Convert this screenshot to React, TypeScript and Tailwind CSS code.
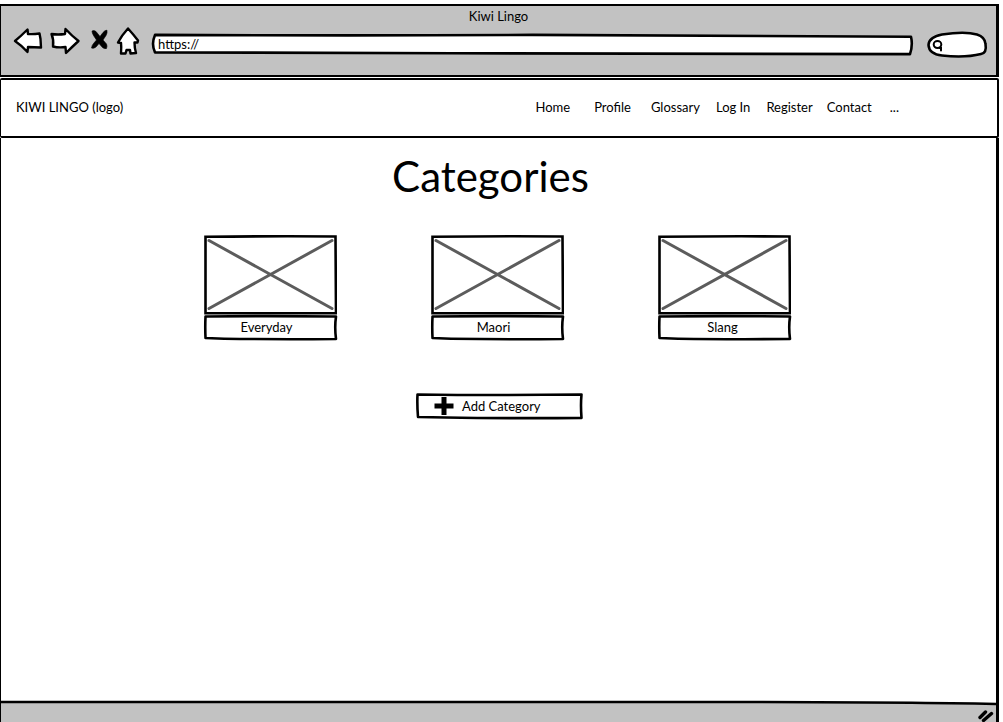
import type { ReactNode } from 'react';

const navLinks = [
  { label: 'Home', spacing: '' },
  { label: 'Profile', spacing: 'ml-6' },
  { label: 'Glossary', spacing: 'ml-5' },
  { label: 'Log In', spacing: 'ml-4' },
  { label: 'Register', spacing: 'ml-4' },
  { label: 'Contact', spacing: 'ml-3.5' },
  { label: '...', spacing: 'ml-4.5' },
];

const categories = [
  { label: 'Everyday', spacing: 'pr-2' },
  { label: 'Maori', spacing: 'pr-2' },
  { label: 'Slang', spacing: 'pr-1' },
];

/* Hand-drawn outline that stretches with the box it decorates. */
function Outline({ box, d }: { box: string; d: string }) {
  return (
    <svg
      aria-hidden="true"
      viewBox={box}
      preserveAspectRatio="none"
      className="pointer-events-none absolute inset-0 size-full overflow-visible"
    >
      <path d={d} fill="white" stroke="black" strokeWidth="2.6" strokeLinejoin="round" vectorEffect="non-scaling-stroke" />
    </svg>
  );
}

function IconButton({ label, className, children }: { label: string; className: string; children: ReactNode }) {
  return (
    <button type="button" aria-label={label} className={`shrink-0 ${className}`}>
      {children}
    </button>
  );
}

function BrowserBar() {
  return (
    <header className="mr-1 h-[73px] border-2 border-r-3 border-l-1 border-black bg-[#c2c2c2]">
      <div className="h-[19px] text-center leading-5">Kiwi Lingo</div>
      <div className="flex h-8 items-center pl-3 pr-[9px]">
        <IconButton label="Back" className="h-8 w-8">
          <svg viewBox="0 0 32 32" className="size-full" fill="white" stroke="black" strokeWidth="2.4" strokeLinejoin="round">
            <path d="M2 16 Q8 11 14.5 4.500 L15 9 Q20 9.500 26.500 8.500 L27.500 14 L28 22.500 Q21 22 15 22 L14.500 27 Q8 20 2 16 Z" />
          </svg>
        </IconButton>
        <IconButton label="Forward" className="ml-1 h-8 w-8">
          <svg viewBox="0 0 32 32" className="size-full" fill="white" stroke="black" strokeWidth="2.4" strokeLinejoin="round">
            <path d="M2.5 9 Q9 10 16 9 L16.500 4 Q23 11 29.500 16 Q23 22 17 28 L16.500 22 Q10 23 4 21.500 Q5 15 2.500 9 Z" />
          </svg>
        </IconButton>
        <IconButton label="Stop" className="ml-1.5 h-8 w-8">
          <svg viewBox="0 0 32 32" className="size-full" fill="black" stroke="black" strokeWidth="0.6" strokeLinejoin="round">
            <path d="M5 6 Q7 5 9 6.500 L13 11.500 L16 7.500 Q18 5 20 5.200 Q20.500 8 19 10.500 L16 15 L19.500 19 Q20.500 21 19.500 23.500 Q17 24 15.500 22.500 L12 18.500 L9 22 Q6.500 24 4.500 23 Q5 20 6.500 18.500 L9.500 15 L6.500 10.500 Q5 8 5 6 Z" />
          </svg>
        </IconButton>
        <IconButton label="Home page" className="-ml-1.5 h-8 w-8">
          <svg viewBox="0 0 32 32" className="size-full" fill="white" stroke="black" strokeWidth="2.4" strokeLinejoin="round">
            <path d="M15 3.500 Q20 9 25 15.500 L24.500 17.500 L21.500 17.500 Q21.500 23 23 28 L17.500 28.500 L17 25 L13.500 25 L12.500 28.500 L8 28.500 Q8.500 22 8 18 L5 17.500 Q9 10 15 3.500 Z" />
          </svg>
        </IconButton>
        <div className="relative ml-[7px] mt-2 h-[22px] min-w-0 grow">
          <Outline box="0 0 760 24" d="M3 1 Q200 2 380 1 Q600 3 758 3 Q760 12 757 22 Q500 21 300 21 L3 20 Q-1 11 3 1 Z" />
          <input
            aria-label="Address"
            defaultValue="https://"
            className="relative h-5 w-full bg-transparent px-1.5 leading-5 outline-none"
          />
        </div>
        <div className="relative ml-3.5 mt-2 h-6 w-15 shrink-0">
          <Outline box="0 0 60 24" d="M1.500 12 Q2 4 15 1.500 Q38 -2 50 1.500 Q58 4 58.500 11 Q60 20 54 21 Q38 25 15 22.500 Q2 21 1.500 12 Z" />
          <svg aria-hidden="true" viewBox="0 0 16 16" className="absolute left-1 top-1 size-4" fill="none" stroke="black" strokeWidth="2" strokeLinecap="round">
            <ellipse cx="6.500" cy="7.500" rx="3.800" ry="3.400" />
            <path d="M8.500 11 H10 V13.500" />
          </svg>
          <input aria-label="Search" className="relative h-5 w-full bg-transparent pl-5 outline-none" />
        </div>
      </div>
    </header>
  );
}

function SiteNav() {
  return (
    <div className="mr-1 mt-px flex h-[60px] items-center justify-between rounded-xs border-2 border-l-1 border-black bg-white pb-0.5 pl-[15px] pr-[98px]">
      <a href="#home" className="whitespace-nowrap">KIWI LINGO (logo)</a>
      <nav aria-label="Main" className="flex items-center whitespace-nowrap">
        {navLinks.map(({ label, spacing }) => (
          <a key={label} href={`#${label}`} className={spacing}>
            {label}
          </a>
        ))}
      </nav>
    </div>
  );
}

function CategoryCard({ label, spacing }: { label: string; spacing: string }) {
  return (
    <a href={`#${label}`} className="block w-[133px]">
      <svg aria-hidden="true" viewBox="0 0 133 80" className="block h-20 w-full" fill="none" strokeLinecap="round">
        <path d="M1.5 1.8 Q70 1 131.5 1.5 L132 78.2 Q60 78 1.5 78.3 Z" stroke="black" strokeWidth="2.6" />
        <path d="M5 5.5 L128 73.5 M128 5.5 L5 73.5" stroke="#5c5c5c" strokeWidth="3" />
      </svg>
      <div className="relative h-[25px]">
        <Outline box="0 0 132 25" d="M1.5 1.5 Q60 .8 131 1.5 Q129.500 12 131 24 Q70 24.500 20 23.700 L1.500 23 Q1 12 1.500 1.500 Z" />
        <div className={`relative text-center leading-6 ${spacing}`}>{label}</div>
      </div>
    </a>
  );
}

export default function App() {
  return (
    <div className="flex min-h-screen flex-col bg-white pt-1 font-['Lato','Liberation_Sans',sans-serif] text-[13px] leading-5 text-black">
      <BrowserBar />
      <SiteNav />
      <div className="mr-1 flex grow flex-col border-l-1 border-r-3 border-black">
        <main className="grow">
          <h1 className="pr-4 pt-3.5 text-center text-[42px] leading-12">Categories</h1>
          <section aria-label="Categories" className="mt-[35px] flex justify-center gap-[94px] pr-0.5">
            {categories.map((category) => (
              <CategoryCard key={category.label} {...category} />
            ))}
          </section>
          <div className="mt-[53px] flex justify-center pl-0.5">
            <button type="button" className="relative flex h-[26px] w-[167px] items-center pl-[18px]">
              <Outline box="0 0 167 26" d="M1.500 1.500 Q80 2.500 165.500 1.500 Q164.500 12 165.500 25 Q90 25.500 30 24.500 L2 24 Q1 12 1.500 1.500 Z" />
              <svg aria-hidden="true" viewBox="0 0 20 20" className="relative size-5" stroke="black" strokeWidth="5" strokeLinecap="butt">
                <path d="M10 1 V19 M.5 10 H19.500" />
              </svg>
              <span className="relative ml-2">Add Category</span>
            </button>
          </div>
        </main>
        <footer className="relative flex h-[21px] items-end justify-end bg-[#c2c2c2] pr-px">
          <svg
            aria-hidden="true"
            viewBox="0 0 996 4"
            preserveAspectRatio="none"
            className="absolute inset-x-0 top-0 h-1 w-full overflow-visible"
            fill="none"
          >
            <path d="M0 0 V-1 H996 V3 Q900 1 700 1 Z" fill="white" />
            <path d="M0 1 H700 Q900 1 996 3" stroke="black" strokeWidth="2.400" vectorEffect="non-scaling-stroke" />
          </svg>
          <svg aria-hidden="true" viewBox="0 0 18 14" className="h-3.5 w-[18px]" stroke="black" strokeWidth="3.4" strokeLinecap="round">
            <path d="M3 9.500 L8.500 4 M6.500 12.500 L14.500 5.500" />
          </svg>
        </footer>
      </div>
    </div>
  );
}
